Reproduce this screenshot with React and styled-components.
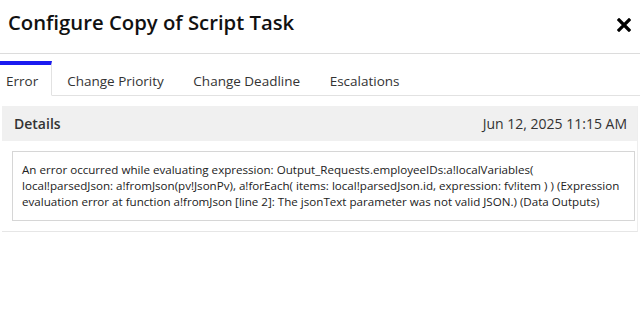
import React from 'react';
import styled, { createGlobalStyle } from 'styled-components';

const GlobalStyle = createGlobalStyle`
  html, body {
    margin: 0;
    padding: 0;
    background: #fff;
    font-family: "Open Sans", "Noto Sans", sans-serif;
    color: #333;
  }
`;

const Page = styled.div`
  width: 640px;
  height: 310px;
  background: #fff;
  overflow: hidden;
`;

const Header = styled.div`
  height: 54px;
  display: flex;
  align-items: center;
  justify-content: space-between;
  padding: 0 8px;
  border-bottom: 1px solid #dcdcdc;
  box-sizing: border-box;
`;

const Title = styled.h1`
  margin: 0;
  font-size: 20.3px;
  font-weight: 600;
  color: #111;
  line-height: 1;
  padding-bottom: 8px;
`;

const CloseButton = styled.button`
  border: 0;
  background: none;
  padding: 0;
  width: 16px;
  height: 16px;
  display: flex;
  align-items: center;
  justify-content: center;
  cursor: pointer;
  margin-bottom: 4px;
`;

const TabBar = styled.div`
  display: flex;
  margin-top: 7px;
  height: 35px;
`;

const Tab = styled.div`
  font-size: 13.5px;
  color: #333;
  padding: 2px ${({ active }) => (active ? '13px' : '14.5px')} 0 ${({ active }) => (active ? '6px' : '15px')};
  display: flex;
  align-items: center;
  box-sizing: border-box;
  border-top: 4px solid ${({ active }) => (active ? '#1a1af0' : 'transparent')};
  border-right: ${({ active }) => (active ? '1px solid #e2e2e2' : '0')};
  border-bottom: 1px solid ${({ active }) => (active ? 'transparent' : '#e2e2e2')};
`;

const TabFill = styled.div`
  flex: 1;
  border-bottom: 1px solid #e2e2e2;
`;

const Panel = styled.div`
  margin: 10px 2px 0 2px;
  border-bottom: 1px solid #e6e6e6;
  border-right: 1px solid #eeeeee;
  padding-bottom: 10px;
`;

const PanelHeader = styled.div`
  height: 35px;
  background: #f0f0f0;
  display: flex;
  align-items: center;
  justify-content: space-between;
  padding: 0 10px 0 12px;
  font-size: 14px;
`;

const PanelTitle = styled.span`
  font-weight: 600;
  color: #333;
`;

const Timestamp = styled.span`
  color: #333;
`;

const MessageBox = styled.div`
  margin: 10px 2px 0 10px;
  border: 1px solid #d6d6d6;
  padding: 10px 9px 10px 9px;
  font-size: 11.6px;
  line-height: 16px;
  color: #222;
  white-space: nowrap;
`;

const CloseIcon = () => (
  <svg width="14" height="14" viewBox="0 0 14 14">
    <path d="M2 2 L12 12 M12 2 L2 12" stroke="#000" strokeWidth="3.2" strokeLinecap="square" />
  </svg>
);

const App = () => (
  <Page>
    <GlobalStyle />
    <Header>
      <Title>Configure Copy of Script Task</Title>
      <CloseButton aria-label="Close">
        <CloseIcon />
      </CloseButton>
    </Header>
    <TabBar>
      <Tab active>Error</Tab>
      <Tab>Change Priority</Tab>
      <Tab>Change Deadline</Tab>
      <Tab>Escalations</Tab>
      <TabFill />
    </TabBar>
    <Panel>
      <PanelHeader>
        <PanelTitle>Details</PanelTitle>
        <Timestamp>Jun 12, 2025 11:15 AM</Timestamp>
      </PanelHeader>
      <MessageBox>
        An error occurred while evaluating expression: Output_Requests.employeeIDs:a!localVariables(
        <br />
        local!parsedJson: a!fromJson(pv!JsonPv), a!forEach( items: local!parsedJson.id, expression: fv!item ) ) (Expression
        <br />
        evaluation error at function a!fromJson [line 2]: The jsonText parameter was not valid JSON.) (Data Outputs)
      </MessageBox>
    </Panel>
  </Page>
);

export default App;
